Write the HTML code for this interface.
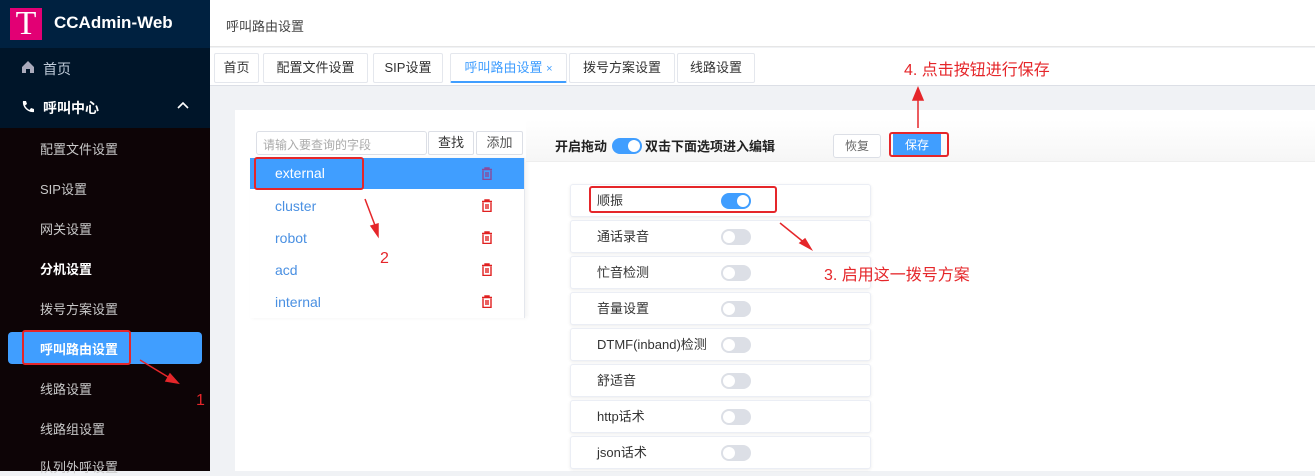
<!DOCTYPE html>
<html><head><meta charset="utf-8"><style>
*{margin:0;padding:0;box-sizing:border-box}
body{width:1315px;height:471px;overflow:hidden;background:#f0f2f5;font-family:"Liberation Sans","Noto Sans CJK SC",sans-serif;position:relative;font-size:13px;color:#333}
.a{position:absolute;white-space:nowrap}
.side{left:0;top:0;width:210px;height:471px;background:#0d0406}
.sm{color:#c8c8c8;font-size:13px;left:40px}
.tab{top:53px;height:30px;border:1px solid #e4e7ed;background:#fff;font-size:13px;line-height:28px;text-align:center;color:#333;border-radius:2px}
.row{left:275px;font-size:14px;color:#4a90e2}
.tr{left:481px;width:12px;height:13px}
.card{left:570px;width:301px;height:33px;background:#fff;border:1px solid #ebeef5;border-radius:3px;box-shadow:0 1px 3px rgba(0,0,0,.08)}
.card span{position:absolute;left:26px;top:0;line-height:31px;font-size:13px;color:#333}
.sw{position:absolute;left:150px;top:8px;width:30px;height:16px;border-radius:8px;background:#dcdfe6}
.sw:after{content:"";position:absolute;left:2px;top:2px;width:12px;height:12px;border-radius:50%;background:#fff}
.sw.on{background:#409eff}.sw.on:after{left:16px}
.red{color:#e5262a;font-size:16px}
.box{border:2px solid #e5262a;border-radius:3px}
</style></head><body>
<div class="a side"></div>
<div class="a" style="left:0;top:0;width:210px;height:48px;background:#002140"></div>
<div class="a" style="left:0;top:48px;width:210px;height:80px;background:#001529"></div>
<div class="a" style="left:10px;top:8px;width:32px;height:32px;background:#e20074;color:#fff;font-family:'Liberation Serif',serif;font-size:34px;line-height:32px;text-align:center">T</div>
<div class="a" style="left:54px;top:13px;color:#fff;font-weight:bold;font-size:17px">CCAdmin-Web</div>
<svg class="a" style="left:21px;top:60px" width="14" height="14" viewBox="0 0 14 14"><path d="M1 7L7 1l6 6v6H9V9H5v4H1z" fill="#aab"/></svg>
<div class="a" style="left:43px;top:59px;color:#bfcbd9;font-size:14px">首页</div>
<svg class="a" style="left:21px;top:100px" width="14" height="14" viewBox="0 0 14 14"><path d="M2 1l3 0 1 3-2 1.5c1 2 2.5 3.5 4.5 4.5L10 8l3 1 0 3c-6 1-12-5-11-11z" fill="#fff"/></svg>
<div class="a" style="left:43px;top:98px;color:#fff;font-size:14px;font-weight:bold">呼叫中心</div>
<svg class="a" style="left:177px;top:101px" width="12" height="8" viewBox="0 0 12 8"><path d="M1 7l5-5 5 5" stroke="#fff" stroke-width="1.6" fill="none"/></svg>
<div class="a sm" style="top:139px">配置文件设置</div>
<div class="a sm" style="top:179px">SIP设置</div>
<div class="a sm" style="top:219px">网关设置</div>
<div class="a sm" style="top:259px;color:#fff;font-weight:bold">分机设置</div>
<div class="a sm" style="top:299px">拨号方案设置</div>
<div class="a" style="left:8px;top:332px;width:194px;height:32px;background:#409eff;border-radius:4px"></div>
<div class="a box" style="left:22px;top:330px;width:109px;height:35px"></div>
<div class="a sm" style="top:339px;color:#fff;font-weight:bold">呼叫路由设置</div>
<div class="a sm" style="top:379px">线路设置</div>
<div class="a sm" style="top:419px">线路组设置</div>
<div class="a sm" style="top:457px">队列外呼设置</div>

<div class="a" style="left:210px;top:0;width:1105px;height:47px;background:#fff;border-bottom:1px solid #e6e6e6"></div>
<div class="a" style="left:226px;top:16px;font-size:13px;color:#444">呼叫路由设置</div>
<div class="a" style="left:210px;top:48px;width:1105px;height:38px;background:#fff;border-bottom:1px solid #dcdfe6"></div>
<div class="a tab" style="left:214px;width:45px">首页</div>
<div class="a tab" style="left:263px;width:105px">配置文件设置</div>
<div class="a tab" style="left:373px;width:70px">SIP设置</div>
<div class="a tab" style="left:450px;width:117px;color:#409eff;border-bottom:2px solid #409eff">呼叫路由设置 <span style="font-size:11px">×</span></div>
<div class="a tab" style="left:569px;width:106px">拨号方案设置</div>
<div class="a tab" style="left:677px;width:78px">线路设置</div>

<div class="a" style="left:235px;top:110px;width:1080px;height:361px;background:#fff"></div>
<div class="a" style="left:256px;top:131px;width:171px;height:24px;border:1px solid #dcdfe6;border-radius:3px;font-size:12px;color:#aaa;padding:4px 6px">请输入要查询的字段</div>
<div class="a" style="left:428px;top:131px;width:46px;height:24px;border:1px solid #dcdfe6;border-radius:2px;text-align:center;line-height:22px">查找</div>
<div class="a" style="left:476px;top:131px;width:47px;height:24px;border:1px solid #dcdfe6;border-radius:2px;text-align:center;line-height:22px;color:#555">添加</div>
<div class="a" style="left:250px;top:158px;width:275px;height:160px;border-right:1px solid #e4e7ed;box-shadow:2px 0 4px rgba(0,0,0,.05)"></div>
<div class="a" style="left:250px;top:158px;width:274px;height:31px;background:#409eff"></div>
<div class="a box" style="left:254px;top:157px;width:110px;height:33px"></div>
<div class="a row" style="top:165px;color:#fff">external</div>
<div class="a row" style="top:198px">cluster</div>
<div class="a row" style="top:230px">robot</div>
<div class="a row" style="top:262px">acd</div>
<div class="a row" style="top:294px">internal</div>
<svg width="0" height="0" style="position:absolute"><defs><symbol id="t" viewBox="0 0 12 13"><path d="M1 2.5h10M4 2.5V1h4v1.5M2 3.5v9h8v-9M5 5v5M7 5v5" stroke="currentColor" stroke-width="1.4" fill="none"/></symbol></defs></svg>
<svg class="a tr" style="top:167px;color:#8a4a9a"><use href="#t"/></svg>
<svg class="a tr" style="top:199px;color:#e02020"><use href="#t"/></svg>
<svg class="a tr" style="top:231px;color:#e02020"><use href="#t"/></svg>
<svg class="a tr" style="top:263px;color:#e02020"><use href="#t"/></svg>
<svg class="a tr" style="top:295px;color:#e02020"><use href="#t"/></svg>

<div class="a" style="left:526px;top:120px;width:789px;height:42px;background:linear-gradient(#fff,#f6f6f6);border-bottom:1px solid #eee"></div>
<div class="a" style="left:555px;top:136px;font-size:13px;font-weight:bold;color:#222">开启拖动</div>
<div class="a" style="left:612px;top:138px;width:30px;height:16px;border-radius:8px;background:#409eff"><div style="position:absolute;left:16px;top:2px;width:12px;height:12px;border-radius:50%;background:#fff"></div></div>
<div class="a" style="left:645px;top:136px;font-size:13px;font-weight:bold;color:#222">双击下面选项进入编辑</div>
<div class="a" style="left:833px;top:134px;width:48px;height:24px;border:1px solid #dcdfe6;border-radius:3px;text-align:center;line-height:22px;font-size:12px;color:#666;background:#fff">恢复</div>
<div class="a" style="left:893px;top:134px;width:48px;height:22px;background:#409eff;color:#fff;text-align:center;line-height:22px;font-size:12px">保存</div>
<div class="a box" style="left:889px;top:132px;width:60px;height:25px"></div>

<div class="a card" style="top:184px"><span>顺振</span><div class="sw on"></div></div>
<div class="a box" style="left:589px;top:186px;width:188px;height:27px"></div>
<div class="a card" style="top:220px"><span>通话录音</span><div class="sw"></div></div>
<div class="a card" style="top:256px"><span>忙音检测</span><div class="sw"></div></div>
<div class="a card" style="top:292px"><span>音量设置</span><div class="sw"></div></div>
<div class="a card" style="top:328px"><span>DTMF(inband)检测</span><div class="sw"></div></div>
<div class="a card" style="top:364px"><span>舒适音</span><div class="sw"></div></div>
<div class="a card" style="top:400px"><span>http话术</span><div class="sw"></div></div>
<div class="a card" style="top:436px"><span>json话术</span><div class="sw"></div></div>

<div class="a red" style="left:904px;top:56px">4. 点击按钮进行保存</div>
<div class="a red" style="left:824px;top:261px">3. 启用这一拨号方案</div>
<div class="a red" style="left:380px;top:250px">2</div>
<div class="a red" style="left:196px;top:392px">1</div>
<svg class="a" style="left:0;top:0" width="1315" height="471"><g stroke="#e5262a" stroke-width="1.5" fill="#e5262a">
<line x1="918" y1="128" x2="918" y2="96"/><path d="M913 100l5-12 5 12z"/>
<line x1="780" y1="223" x2="806" y2="244"/><path d="M800 243l11 6-6-10z"/>
<line x1="365" y1="199" x2="376" y2="228"/><path d="M371 226l7 10 0-12z"/>
<line x1="140" y1="360" x2="173" y2="380"/><path d="M166 381l12 2-8-9z"/>
</g></svg>
</body></html>
